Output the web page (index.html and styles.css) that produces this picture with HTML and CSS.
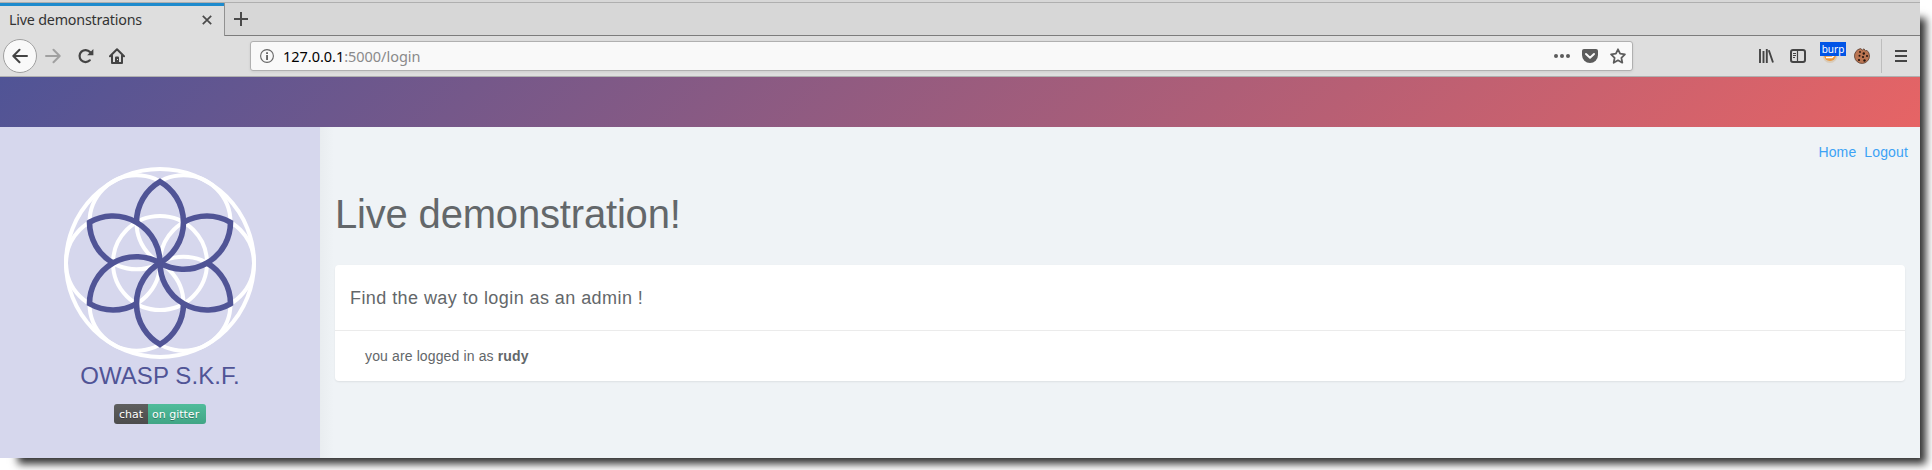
FILE: index.html
```html
<!DOCTYPE html>
<html lang="en">
<head>
<meta charset="utf-8">
<title>Live demonstrations</title>
<link rel="stylesheet" href="styles.css">
</head>
<body>
<div class="window">
  <div class="tabstrip">
    <div class="tab">
      <span class="tab-title">Live demonstrations</span>
      <svg class="tab-close" width="10" height="10" viewBox="0 0 10 10"><path d="M.8.8l8.4 8.4M9.2.8L.8 9.2" stroke="#4a4a4a" stroke-width="1.7"/></svg>
    </div>
    <div class="tab-rest">
      <svg width="14" height="14" viewBox="0 0 14 14"><path d="M7 0v14M0 7h14" stroke="#4a4a4a" stroke-width="2"/></svg>
    </div>
  </div>
  <div class="toolbar">
    <span class="back"><svg width="16" height="16" viewBox="0 0 16 16" fill="none" stroke="#444" stroke-width="2" stroke-linecap="round" stroke-linejoin="round"><path d="M15 8H1.5M7.5 1.8L1.3 8l6.2 6.2"/></svg></span>
    <svg class="forward" width="16" height="16" viewBox="0 0 16 16" fill="none" stroke="#a0a0a0" stroke-width="2" stroke-linecap="round" stroke-linejoin="round"><path d="M1 8h13.5M8.5 1.8L14.7 8l-6.2 6.2"/></svg>
    <svg class="reload" width="16" height="16" viewBox="0 0 16 16"><path d="M11.8 12.3A6 6 0 1 1 12 4" fill="none" stroke="#444" stroke-width="2.2" stroke-linecap="round"/><path d="M15.4 1v6.2H9.2z" fill="#444"/></svg>
    <svg class="home" width="16" height="16" viewBox="0 0 16 16"><path d="M1 8.2L8 1.2l7 7M3 7.5V15h10V7.5" fill="none" stroke="#444" stroke-width="2" stroke-linecap="round" stroke-linejoin="round"/><path d="M6 15V9.5A1 1 0 0 1 7 8.500h2a1 1 0 0 1 1 1V15z" fill="#444"/><path d="M8 11h1v1H8z" fill="#ddd"/></svg>
    <div class="urlbar">
      <svg class="info" width="14" height="14" viewBox="0 0 14 14"><circle cx="7" cy="7" r="6.4" fill="none" stroke="#666" stroke-width="1.1"/><path d="M6.100 6h1.900v4.900H6.100zM6.100 3.200h1.900v1.700H6.100z" fill="#666"/></svg>
      <span class="url"><b class="host">127.0.0.1</b>:5000/login</span>
      <svg class="dots" width="16" height="16" viewBox="0 0 16 16" fill="#5c5c5c"><circle cx="2" cy="8" r="2"/><circle cx="8" cy="8" r="2"/><circle cx="14" cy="8" r="2"/></svg>
      <svg class="pocket" width="16" height="16" viewBox="0 0 16 16"><path d="M2 1h12a2 2 0 0 1 2 2v4a8 8 0 0 1-16 0V3a2 2 0 0 1 2-2z" fill="#5c5c5c"/><path d="M4 6l4 3.800L12 6" fill="none" stroke="#f9f9f9" stroke-width="2" stroke-linecap="round" stroke-linejoin="round"/></svg>
      <svg class="star" width="16" height="16" viewBox="0 0 16 16"><path d="M8 1.300l2.100 4.400 4.800.7-3.500 3.400.9 4.900L8 12.300l-4.300 2.400.9-4.900L1.100 6.400l4.800-.7z" fill="none" stroke="#5c5c5c" stroke-width="1.800" stroke-linejoin="round"/></svg>
    </div>
    <svg class="library" width="16" height="16" viewBox="0 0 16 16" fill="none" stroke="#444" stroke-width="2"><path d="M2 1v14M5.500 3v12M8.800 1v14M10.800 2.300l4.200 12.200" stroke-width="1.900"/></svg>
    <svg class="sidebar-icon" width="16" height="16" viewBox="0 0 16 16" fill="none" stroke="#444"><rect x="1" y="2" width="14" height="12" rx="2" stroke-width="2"/><path d="M7.500 2v12" stroke-width="1.200"/><path d="M3 5.500h3M3 7.500h3M3 9.500h2" stroke-width="1"/></svg>
    <div class="burp">
      <svg width="16" height="16" viewBox="0 0 16 16"><circle cx="8" cy="7.500" r="7.500" fill="#d9cbb9"/><circle cx="8" cy="7" r="6" fill="#eb983d"/><path d="M4 9.500h6l2-2" stroke="#fff" stroke-width="1.300" fill="none"/></svg>
      <span class="burp-label">burp</span>
    </div>
    <svg class="cookie" width="16" height="16" viewBox="0 0 16 16"><path d="M6.500.6A7.500 7.500 0 1 0 15.500 8 7.500 7.500 0 0 0 13 2.400L11.500 3 10 .8 8.500 2z" fill="#bb7552" stroke="#593c2e" stroke-width=".8"/><g fill="#25150f"><circle cx="6" cy="4" r=".9"/><circle cx="9.800" cy="5.500" r="1.200"/><circle cx="5.500" cy="7.800" r="1"/><circle cx="9" cy="9" r="1.100"/><circle cx="13" cy="8" r="1"/><circle cx="5" cy="12" r="1.100"/><circle cx="10.500" cy="12.500" r="1.200"/></g></svg>
    <span class="divider"></span>
    <svg class="menu" width="12" height="12" viewBox="0 0 12 12" fill="#444"><path d="M0 0h12v2H0zM0 5h12v2H0zM0 10h12v2H0z"/></svg>
  </div>
  <div class="banner"></div>
  <div class="page">
    <aside class="side">
      <svg class="logo" width="192" height="192" viewBox="-96 -96 192 192" fill="none">
        <defs><path id="petal" d="M-23.500-40.700A47 47 0 0 1 0-81.400A47 47 0 0 1 0 0"/></defs>
        <g stroke="#fff" stroke-width="4">
          <circle r="94"/><circle r="47"/>
          <circle cx="47" r="47"/><circle cx="-47" r="47"/>
          <circle cx="23.500" cy="-40.700" r="47"/><circle cx="-23.500" cy="-40.700" r="47"/>
          <circle cx="23.500" cy="40.700" r="47"/><circle cx="-23.500" cy="40.700" r="47"/>
        </g>
        <g stroke="#505496" stroke-width="5.600">
          <use href="#petal"/><use href="#petal" transform="rotate(60)"/><use href="#petal" transform="rotate(120)"/>
          <use href="#petal" transform="rotate(180)"/><use href="#petal" transform="rotate(240)"/><use href="#petal" transform="rotate(300)"/>
        </g>
      </svg>
      <div class="brand">OWASP S.K.F.</div>
      <div class="badge"><span class="chat">chat</span><span class="gitter">on gitter</span></div>
    </aside>
    <main class="main">
      <nav class="nav"><a>Home</a><a>Logout</a></nav>
      <h1 class="heading">Live demonstration!</h1>
      <section class="card">
        <h2 class="card-title">Find the way to login as an admin !</h2>
        <p class="card-text">you are logged in as <b>rudy</b></p>
      </section>
    </main>
  </div>
</div>
</body>
</html>
```
FILE: styles.css
```css
* { box-sizing: border-box; }
html { height: 470px; overflow: hidden; background: #fff; }
body { margin: 0; height: 470px; font-family: "Liberation Sans", Arial, sans-serif; }
svg { display: block; flex: none; }
.window { width: 1920px; height: 458px; display: flex; flex-direction: column; box-shadow: 12px 12px 8px -6px #333; }
.tabstrip { height: 36px; display: flex; padding-top: 3px; background: linear-gradient(#d7d7d7 2px, #afafaf 2px, #afafaf 3px, #d7d7d7 3px); font-family: "Noto Sans", sans-serif; }
.tab { width: 225px; display: flex; align-items: center; justify-content: space-between; padding: 0 12px 0 9px; background: #dedede; border-right: 1px solid #919191; box-shadow: inset 0 3px #1e8bcd; }
.tab-title { font-size: 14.300px; line-height: 20px; letter-spacing: -.2px; color: #333; }
.tab-rest { flex: 1; padding: 9px 0 0 9px; border-bottom: 1px solid #7c7c7c; }
.toolbar { height: 41px; display: flex; align-items: center; background: #dedede; border-bottom: 1px solid #b0b0b0; font-family: "Noto Sans", sans-serif; }
.back { width: 34px; height: 34px; margin-left: 3px; border: 1px solid #a0a0a0; border-radius: 50%; background: #f9f9f9; display: flex; align-items: center; justify-content: center; }
.forward { margin-left: 8px; }
.reload { margin-left: 17px; }
.home { margin-left: 15px; }
.urlbar { width: 1383px; height: 30px; margin-left: 125px; padding: 0 6px 0 9px; display: flex; align-items: center; border: 1px solid #b0b0b0; border-radius: 3px; background: #f9f9f9; box-shadow: 0 1px 3px rgba(0,0,0,.08); }
.url { flex: 1; margin-left: 9px; font-size: 14.500px; letter-spacing: -.03px; color: #8a8a8a; }
.host { font-weight: 400; color: #000; }
.pocket { margin-left: 12px; }
.star { margin-left: 12px; }
.library { margin-left: 125px; }
.sidebar-icon { margin-left: 16px; }
.burp { position: relative; margin-left: 16px; }
.burp-label { position: absolute; left: -2px; top: -6px; width: 26px; height: 14px; background: #0155e6; color: #fff; font-size: 10px; line-height: 14px; text-align: center; }
.cookie { margin-left: 16px; }
.divider { width: 1px; height: 34px; margin-left: 11px; background: #bdbdbd; }
.menu { margin-left: 13px; }
.banner { height: 50px; background: linear-gradient(135deg, #505496, #e66465); }
.page { flex: 1; display: flex; min-height: 0; }
.side { width: 320px; padding-top: 40px; display: flex; flex-direction: column; align-items: center; background: #d6d7ed; }
.brand { margin-top: 3px; font-size: 24px; line-height: 28px; letter-spacing: .08px; color: #505496; }
.badge { display: flex; height: 20px; margin-top: 14px; border-radius: 3px; overflow: hidden; font: 11px/21px "DejaVu Sans", sans-serif; color: #fff; text-shadow: 0 1px rgba(1,1,1,.3); }
.chat { width: 34px; text-align: center; background: linear-gradient(#5f5f5f, #4c4c4c); }
.gitter { width: 58px; padding-left: 4px; white-space: nowrap; background: linear-gradient(#50bc9b, #41a585); }
.main { flex: 1; padding: 15px 15px 0; background: linear-gradient(90deg, #e9edf0, #eff3f6 14px); }
.nav { display: flex; justify-content: flex-end; gap: 8px; margin-right: -3px; font-size: 14px; line-height: 20px; letter-spacing: .14px; color: #3ca2f5; }
.heading { margin: 29px 0 0; font-size: 40px; font-weight: 400; line-height: 46px; letter-spacing: -.18px; color: #63676a; }
.card { height: 116px; margin-top: 28px; border-radius: 4px; background: #fff; box-shadow: 0 1px 2px rgba(0,0,0,.08); color: #63676a; }
.card-title { height: 66px; margin: 0; padding-left: 15px; border-bottom: 1px solid #ebebeb; font-size: 18px; font-weight: 400; line-height: 66px; letter-spacing: .43px; }
.card-text { margin: 0; padding-left: 30px; font-size: 14px; line-height: 50px; letter-spacing: .13px; }
```
